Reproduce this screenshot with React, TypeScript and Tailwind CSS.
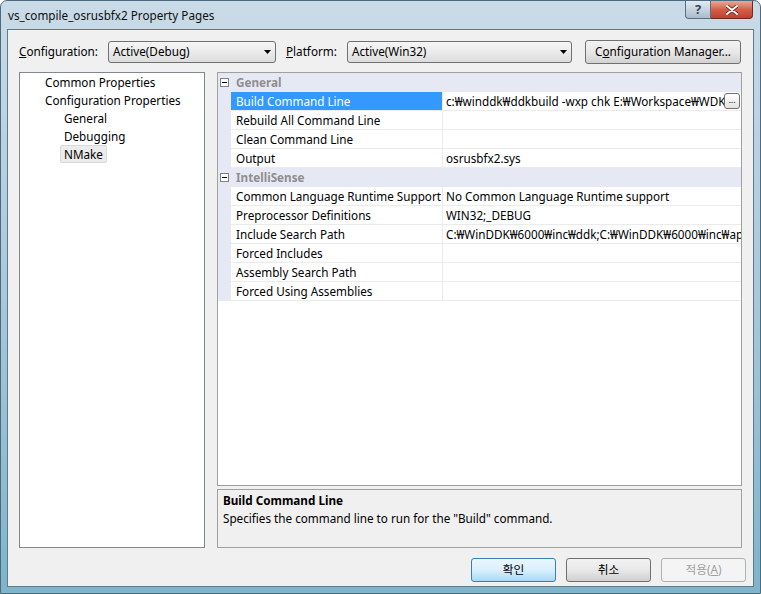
import React from "react";

const font = { fontFamily: '"Noto Sans", "Noto Sans CJK KR", sans-serif' };

const general = [
  { name: "Build Command Line", value: "c:₩winddk₩ddkbuild -wxp chk E:₩Workspace₩WDK₩osrusbfx2", selected: true },
  { name: "Rebuild All Command Line", value: "" },
  { name: "Clean Command Line", value: "" },
  { name: "Output", value: "osrusbfx2.sys" },
];

const intellisense = [
  { name: "Common Language Runtime Support", value: "No Common Language Runtime support" },
  { name: "Preprocessor Definitions", value: "WIN32;_DEBUG" },
  { name: "Include Search Path", value: "C:₩WinDDK₩6000₩inc₩ddk;C:₩WinDDK₩6000₩inc₩api;C:₩WinDDK₩6000₩inc₩crt" },
  { name: "Forced Includes", value: "" },
  { name: "Assembly Search Path", value: "" },
  { name: "Forced Using Assemblies", value: "" },
];

const Arrow = () => (
  <svg width="7" height="4" viewBox="0 0 7 4" className="shrink-0">
    <path d="M0 0h7L3.5 4z" fill="#000" />
  </svg>
);

const Combo = ({ text, w }: { text: string; w: string }) => (
  <div
    className={`${w} h-[22px] flex items-center justify-between pl-[4px] pr-[4px] border border-[#707070] rounded-[3px] bg-linear-to-b from-[#f6f6f6] via-[#ebebeb] to-[#dcdcdc]`}
  >
    <span>{text}</span>
    <Arrow />
  </div>
);

const Minus = () => (
  <div className="w-[9px] h-[9px] border border-[#808080] bg-white flex items-center justify-center">
    <div className="w-[5px] h-[1px] bg-black" />
  </div>
);

const Category = ({ label }: { label: string }) => (
  <div className="flex h-[19px] bg-[#e6e9f4]">
    <div className="w-[13px] flex items-center justify-center">
      <Minus />
    </div>
    <div className="pl-[5px] leading-[18px] font-bold text-[#8e8e8e]">{label}</div>
  </div>
);

const Row = ({ name, value, selected }: { name: string; value: string; selected?: boolean }) => (
  <div className="flex h-[19px]">
    <div className="w-[13px] bg-[#e6e9f4]" />
    <div
      className={`w-[211px] pl-[5px] pt-[1px] leading-[17px] whitespace-nowrap overflow-hidden border-b border-[#ebebeb] ${
        selected ? "bg-[#3399ff] text-white" : ""
      }`}
    >
      {name}
    </div>
    <div className="flex-1 flex border-l border-b border-[#ebebeb] overflow-hidden">
      <div className="flex-1 pl-[3px] pt-[1px] leading-[17px] whitespace-nowrap overflow-hidden">{value}</div>
      {selected && (
        <div className="shrink-0 mt-[1px] mr-[1px] w-[16px] h-[16px] border border-[#707070] rounded-[3px] bg-linear-to-b from-white to-[#e2e2e2] text-[9px] leading-[11px] text-center overflow-hidden">
          ...
        </div>
      )}
    </div>
  </div>
);

const Button = ({ children, kind }: { children: React.ReactNode; kind?: "default" | "disabled" }) => {
  const cls =
    kind === "default"
      ? "border-[#3c7fb1] from-[#eaf6fd] via-[#d9f0fc] to-[#a7d9f5]"
      : kind === "disabled"
      ? "border-[#adb2b5] from-[#f4f4f4] via-[#f4f4f4] to-[#f4f4f4] text-[#a0a0a0]"
      : "border-[#707070] from-[#f2f2f2] via-[#e8e8e8] to-[#d0d0d0]";
  return (
    <div
      className={`w-[85px] h-[24px] flex items-center justify-center border rounded-[3px] bg-linear-to-b ${cls}`}
    >
      {children}
    </div>
  );
};

export default function App() {
  return (
    <div
      style={font}
      className="w-[761px] h-[594px] flex flex-col text-[11.7px] text-black rounded-t-[7px] border border-[#4d6a80] bg-linear-to-b from-[#c9dbe7] via-[#a9c8d8] to-[#7fb4c9] overflow-hidden"
    >
      {/* title bar */}
      <div className="h-[28px] flex items-start justify-between">
        <div className="pl-[7px] pt-[6px] leading-[16px] text-[#101010]">vs_compile_osrusbfx2 Property Pages</div>
        <div className="flex mr-[7px]">
          <div className="w-[26px] h-[18px] rounded-bl-[4px] border border-t-0 border-[#5b7083] bg-linear-to-b from-[#e3ebf2] to-[#a9bccb] flex items-center justify-center text-[#34495a] text-[13px] leading-none font-bold">
            ?
          </div>
          <div className="w-[42px] h-[18px] rounded-br-[4px] border border-t-0 border-l-0 border-[#6e2a20] bg-linear-to-b from-[#e8a898] via-[#d2604a] to-[#c0402b] flex items-center justify-center">
            <svg width="12" height="10" viewBox="0 0 12 10">
              <path d="M1 1l10 8M11 1L1 9" stroke="#5a1a10" strokeWidth="3.4" strokeLinecap="round" />
              <path d="M1 1l10 8M11 1L1 9" stroke="#fff" strokeWidth="2" strokeLinecap="round" />
            </svg>
          </div>
        </div>
      </div>

      {/* client area */}
      <div className="mx-[6px] mb-[6px] flex-1 border border-[#5c7a90] bg-[#f0f0f0] flex flex-col">
        <div className="flex items-center h-[23px] mt-[10px] pl-[11px]">
          <div className="w-[89px]">
            <span className="underline">C</span>onfiguration:
          </div>
          <Combo text="Active(Debug)" w="w-[168px]" />
          <div className="w-[61px] ml-[10px]">
            <span className="underline">P</span>latform:
          </div>
          <Combo text="Active(Win32)" w="w-[225px]" />
          <div className="ml-[13px] w-[156px] h-[24px] flex items-center justify-center border border-[#707070] rounded-[3px] bg-linear-to-b from-[#f2f2f2] via-[#e8e8e8] to-[#d2d2d2]">
            C<span className="underline">o</span>nfiguration Manager...
          </div>
        </div>

        <div className="flex gap-[12px] mt-[9px] pl-[11px] h-[476px]">
          {/* tree */}
          <div className="w-[186px] h-full border border-[#828790] bg-white pl-[25px]">
            <div className="leading-[18px]">Common Properties</div>
            <div className="leading-[18px]">Configuration Properties</div>
            <div className="pl-[19px]">
              <div className="leading-[18px]">General</div>
              <div className="leading-[18px]">Debugging</div>
              <div className="h-[18px] flex items-center">
                <span className="-ml-[4px] px-[3px] leading-[16px] border border-[#d9d9d9] bg-[#ececec] rounded-[2px]">
                  NMake
                </span>
              </div>
            </div>
          </div>

          {/* property grid */}
          <div className="w-[525px] h-full flex flex-col gap-[3px]">
            <div className="h-[414px] border border-[#a0a0a0] bg-white">
              <Category label="General" />
              {general.map((r) => (
                <Row key={r.name} {...r} />
              ))}
              <Category label="IntelliSense" />
              {intellisense.map((r) => (
                <Row key={r.name} {...r} />
              ))}
            </div>
            <div className="flex-1 border border-[#a0a0a0] bg-[#f0f0f0] pl-[5px] pt-[1px]">
              <div className="font-bold leading-[18px]">Build Command Line</div>
              <div className="leading-[18px]">Specifies the command line to run for the "Build" command.</div>
            </div>
          </div>
        </div>

        <div className="flex justify-end gap-[10px] mt-[10px] pr-[7px]">
          <Button kind="default">확인</Button>
          <Button>취소</Button>
          <Button kind="disabled">
            <span>
              적용(<span className="underline">A</span>)
            </span>
          </Button>
        </div>
      </div>
    </div>
  );
}
